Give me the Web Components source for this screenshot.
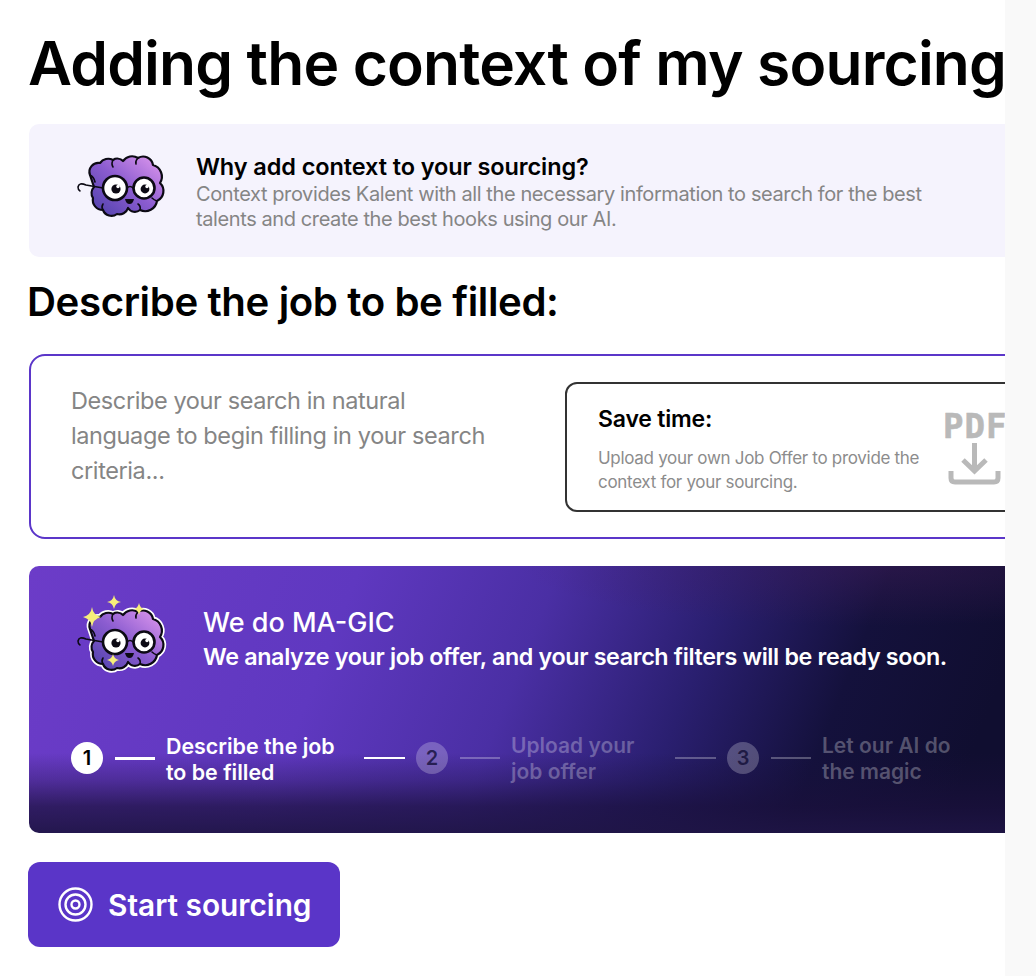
<!doctype html>
<html>
<head>
<meta charset="utf-8">
<style>
  html, body { margin: 0; height: 100%; background: #fff; overflow: hidden; }
  body { font-family: Inter, "Liberation Sans", sans-serif; }
</style>
</head>
<body>
<k-page>
  <k-info-box slot="info" title="Why add context to your sourcing?">
    Context provides Kalent with all the necessary information to search for the best talents and create the best hooks using our AI.
  </k-info-box>
  <k-job-input placeholder="Describe your search in natural language to begin filling in your search criteria..."></k-job-input>
  <k-magic-banner>
    <k-step n="1" active style="--label-w:168px;--after:30px">Describe the job<br>to be filled</k-step>
    <k-step n="2" style="--label-w:123px;--after:41px">Upload your<br>job offer</k-step>
    <k-step n="3" style="--label-w:130px;--after:0px">Let our AI do<br>the magic</k-step>
  </k-magic-banner>
  <k-button>Start sourcing</k-button>
</k-page>

<script>
// bumpy outline of the mascot, see k-brain
const BRAIN_D = 'M12 21a9 9 0 0 1 10-12a10 10 0 0 1 13-3a8 8 0 0 1 10 1a11 11 0 0 1 15-3a10 10 0 0 1 15 7a12 12 0 0 1 7 18a11 11 0 0 1-3 18a12 12 0 0 1-17 9a8 8 0 0 1-12-2a9 9 0 0 1-11 6a9 9 0 0 1-14-4a10 10 0 0 1-10-12a9 9 0 0 1 1-11z';

class KBrain extends HTMLElement {
  connectedCallback() {
    const sparkles = this.hasAttribute('sparkles');
    const id = sparkles ? 'ga' : 'gb';
    this.attachShadow({ mode: 'open' }).innerHTML = `
      <style>
        :host { display: block; width: 90px; height: 64px; flex: none; }
        svg { display: block; overflow: visible; }
      </style>
      <svg width="90" height="64" viewBox="0 0 90 64" fill="none">
        <defs>
          <linearGradient id="${id}" x1="0" y1="1" x2="1" y2="0">
            <stop offset="0" stop-color="#4a3fa8"/>
            <stop offset=".5" stop-color="#8b5cd0"/>
            <stop offset="1" stop-color="#e49cf0"/>
          </linearGradient>
        </defs>
        ${sparkles ? `<path d="${BRAIN_D}" stroke="#fff" stroke-width="5.5" stroke-linejoin="round"/>` : ''}
        <path d="${BRAIN_D}" fill="url(#${id})" stroke="#0c0a14" stroke-width="2.2" stroke-linejoin="round"/>
        <path d="M12 21q4 2 5 7M35 6q-2 4 0 7M60 4q-3 3-2 6M25 56q-2-3 0-6M62 56q1-4-2-6M79 47q-3-1-5-3" stroke="#0c0a14" stroke-width="1.6" stroke-linecap="round"/>
        <path d="M25 34L8 31Q1 28 0 33Q0 36 2 37M49 34q3-3 6 0" stroke="#0c0a14" stroke-width="1.600" stroke-linecap="round"/>
        <circle cx="37" cy="34" r="12" fill="#fff" stroke="#0c0a14" stroke-width="2.600"/>
        <circle cx="66" cy="34" r="10.5" fill="#fff" stroke="#0c0a14" stroke-width="2.600"/>
        <circle cx="38" cy="35" r="4.6" fill="#0c0a14"/>
        <circle cx="67" cy="35" r="4.4" fill="#0c0a14"/>
        <circle cx="40" cy="32.5" r="1.7" fill="#fff"/>
        <circle cx="69" cy="32.5" r="1.7" fill="#fff"/>
        <path d="M47 45h9q-1 5-4.500 5t-4.500-5z" fill="#0c0a14"/>
        ${sparkles ? `
          <g fill="#f6ee7a">
            <path d="M14-1q1 8 9 10q-8 2-9 10q-1-8-9-10q8-2 9-10z"/>
            <path d="M36-13q1 6 7 7q-6 1-7 7q-1-6-7-7q6-1 7-7z"/>
            <path d="M61-5q1 5 5 6q-4 1-5 6q-1-5-5-6q4-1 5-6z"/>
            <path d="M35 46q1 5 6 6q-5 1-6 6q-1-5-6-6q5-1 6-6z"/>
          </g>` : ''}
      </svg>`;
  }
}

class KPage extends HTMLElement {
  constructor() {
    super();
    this.attachShadow({ mode: 'open' }).innerHTML = `
      <style>
        :host { display: flex; height: 976px; color: #000; }
        .main {
          width: 1005px; flex: none; overflow: hidden; box-sizing: border-box;
          padding: 26px 0 0 29px;
        }
        .strip { flex: 1; background: #f9f9f9; }
        h1 {
          margin: 0 0 24px -1px; font-size: 60.500px; line-height: 74px; font-weight: 600;
          letter-spacing: -.85px; white-space: nowrap;
        }
        h2 {
          margin: 20px 0 27px -2px; font-size: 40.200px; line-height: 50px; font-weight: 600;
          letter-spacing: -.4px; white-space: nowrap;
        }
        ::slotted(k-magic-banner) { margin-top: 27px; }
        ::slotted(k-button) { margin: 29px 0 0 -1px; }
      </style>
      <div class="main">
        <h1>Adding the context of my sourcing</h1>
        <slot name="info"></slot>
        <h2>Describe the job to be filled:</h2>
        <slot></slot>
      </div>
      <div class="strip"></div>`;
  }
}

class KInfoBox extends HTMLElement {
  connectedCallback() {
    this.attachShadow({ mode: 'open' }).innerHTML = `
      <style>
        :host {
          display: flex; align-items: center; gap: 28px; box-sizing: border-box;
          width: 1000px; height: 133px; padding: 4px 0 0 49px; background: #f5f3fd; border-radius: 10px;
        }
        k-brain { align-self: flex-start; margin-top: 26px; }
        b { display: block; font-size: 23.500px; line-height: 28px; font-weight: 600; color: #000; letter-spacing: -.1px; margin-bottom: 1px; }
        p { margin: 0; width: 740px; font-size: 20px; line-height: 25px; color: #858585; letter-spacing: -.4px; }
      </style>
      <k-brain></k-brain>
      <div><b>${this.getAttribute('title')}</b><p><slot></slot></p></div>`;
  }
}

class KJobInput extends HTMLElement {
  connectedCallback() {
    this.attachShadow({ mode: 'open' }).innerHTML = `
      <style>
        :host {
          display: flex; box-sizing: border-box; width: 1000px; height: 185px;
          border: 2px solid #5b36c9; border-radius: 16px; padding: 27px 0 0 40px;
        }
        .ph { width: 430px; margin-right: 10px; font-size: 23.500px; line-height: 35px; color: #858585; letter-spacing: -.4px; flex: none; }
        .save {
          box-sizing: border-box; width: 500px; height: 130px; margin: -1px 0 0 54px; flex: none;
          border: 2px solid #333; border-radius: 12px; padding: 20px 0 0 31px;
          display: flex; gap: 15px;
        }
        b { display: block; font-size: 23px; line-height: 30px; font-weight: 600; letter-spacing: -.2px; color: #000; }
        p { margin: 13px 0 0; width: 330px; font-size: 17px; line-height: 23.500px; letter-spacing: -.3px; color: #8c8c8c; }
        .pdf { color: #b9b9b9; display: flex; flex-direction: column; margin-top: 9px; }
        .pdf span {
          font: 700 34px/26px "DejaVu Sans Mono", monospace; letter-spacing: 1px; height: 28px;
          -webkit-text-stroke: .6px #b9b9b9;
        }
        .pdf svg { margin: 1px 0 0 5px; display: block; }
      </style>
      <div class="ph">${this.getAttribute('placeholder')}</div>
      <div class="save">
        <div>
          <b>Save time:</b>
          <p>Upload your own Job Offer to provide the context for your sourcing.</p>
        </div>
        <div class="pdf">
          <span>PDF</span>
          <svg width="53" height="43" viewBox="0 0 53 43" fill="none" stroke="#b9b9b9" stroke-width="5">
            <path d="M26.500 1V29M15 18L26.500 29L38 18"/>
            <path d="M3 29V36q0 4 4 4H46q4 0 4-4V29"/>
          </svg>
        </div>
      </div>`;
  }
}

class KMagicBanner extends HTMLElement {
  constructor() {
    super();
    this.attachShadow({ mode: 'open' }).innerHTML = `
      <style>
        :host {
          display: block; box-sizing: border-box; width: 1000px; height: 267px; border-radius: 10px;
          padding: 29px 0 0 51px; color: #fff;
          background:
            linear-gradient(to bottom, rgba(26,16,60,0) 70%, rgba(26,16,60,.3) 80%, rgba(26,16,60,.72) 90%, rgba(30,20,68,.92) 100%),
            radial-gradient(360px 60px at 85% 0, rgba(70,30,90,.4), rgba(70,30,90,0)),
            linear-gradient(112deg, #6c3cc8 0, #5f38c0 30%, #4a2fa4 48%, #2a1f70 64%, #14113c 78%, #100e30 92%);
        }
        .head { display: flex; gap: 35px; }
        .txt { padding-top: 11px; }
        .t { font-size: 27px; line-height: 34px; font-weight: 500; }
        .s { font-size: 23.300px; line-height: 34px; font-weight: 600; letter-spacing: -.35px; white-space: nowrap; }
        .steps { display: flex; margin: 58px 0 0 -9px; }
      </style>
      <div class="head">
        <k-brain sparkles style="margin:13px 0 0 -2px"></k-brain>
        <div class="txt">
          <div class="t">We do MA-GIC</div>
          <div class="s">We analyze your job offer, and your search filters will be ready soon.</div>
        </div>
      </div>
      <div class="steps"><slot></slot></div>`;
  }
}

class KStep extends HTMLElement {
  connectedCallback() {
    const active = this.hasAttribute('active');
    const n = this.getAttribute('n');
    const op = active ? 1 : .28;
    this.attachShadow({ mode: 'open' }).innerHTML = `
      <style>
        :host { display: flex; align-items: center; height: 52px; margin-right: var(--after); }
        .lead { width: 41px; height: 2px; background: #fff; margin-right: 11px; flex: none; }
        .c {
          width: 32px; height: 32px; border-radius: 50%; flex: none; display: grid; place-items: center;
          background: rgba(255,255,255,${active ? 1 : .24}); font-size: 20px; font-weight: 600;
          color: ${active ? '#000' : 'rgba(14,10,50,.75)'};
        }
        .line { width: 40px; height: ${active ? 3 : 2}px; margin: 0 11px 0 12px; flex: none; background: rgba(255,255,255,${op}); }
        .l {
          width: var(--label-w); font-size: ${active ? 21.4 : 21}px; line-height: 26px; font-weight: 600;
          white-space: nowrap; color: rgba(255,255,255,${op}); padding-top: 2px;
        }
      </style>
      ${n !== '1' ? `<div class="lead" style="${n === '3' ? 'opacity:.28' : ''}"></div>` : ''}
      <div class="c">${n}</div>
      <div class="line"></div>
      <div class="l"><slot></slot></div>`;
  }
}

class KButton extends HTMLElement {
  constructor() {
    super();
    this.attachShadow({ mode: 'open' }).innerHTML = `
      <style>
        :host {
          display: flex; align-items: center; gap: 15px; box-sizing: border-box;
          width: 312px; height: 85px; padding-left: 30px; border-radius: 12px;
          background: #5a35c8; color: #fff; font-size: 29.800px; font-weight: 600;
        }
      </style>
      <svg width="35" height="35" viewBox="0 0 35 35" fill="none" stroke="#fff">
        <circle cx="17.500" cy="17.500" r="16" stroke-width="2.400"/>
        <circle cx="17.500" cy="17.500" r="10" stroke-width="2.400"/>
        <circle cx="17.500" cy="17.500" r="4" stroke-width="2.400"/>
      </svg>
      <slot></slot>`;
  }
}

customElements.define('k-brain', KBrain);
customElements.define('k-info-box', KInfoBox);
customElements.define('k-job-input', KJobInput);
customElements.define('k-magic-banner', KMagicBanner);
customElements.define('k-step', KStep);
customElements.define('k-button', KButton);
customElements.define('k-page', KPage);
</script>
</body>
</html>
